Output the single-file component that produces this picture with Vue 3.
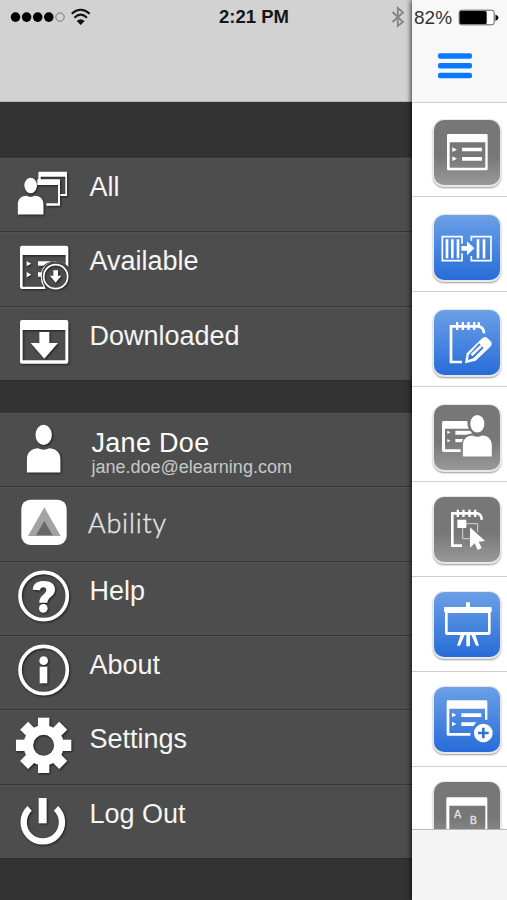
<script setup>
const person = (cx, headTop, k) =>
  `<g transform="translate(${cx} ${headTop}) scale(${k})"><ellipse cx="0" cy="30" rx="25" ry="31"/><path d="M-51 145V104C-51 82-34 71-17 71Q0 80 17 71C34 71 51 82 51 104V145Z"/></g>`

const groups = [
  [
    {
      label: 'All', size: 'short', box: '0 21 240 222',
      art: `<path d="M117 65H201V138H181V132H196V80H122V90H115V67Z"/><path d="M112 88H180V167H139V160H174V105H112Z"/>` + person(92, 84, 0.755),
    },
    {
      label: 'Available', size: 'tall', box: '0 243 240 225',
      art: `<path fill-rule="evenodd" d="M66 287H199Q205 287 205 293V350Q190 334 168 334Q140 336 128 360Q122 378 130 400L137 417H66Q60 417 60 411V293Q60 287 66 287ZM68 315V410H131Q122 396 122 378Q124 340 166 333Q185 333 197 342V315Z"/><path d="M80 334L94 341L80 348ZM80 366L94 374L80 382ZM114 334H155Q140 338 130 347H114ZM114 367H125L123 380H114Z"/><circle cx="167" cy="380" r="36" fill="none" stroke="#fff" stroke-width="5"/><path d="M160 361H174V377H184L167 398L150 377H160Z"/>`,
    },
    {
      label: 'Downloaded', size: 'short', box: '0 18 240 222',
      art: `<path fill-rule="evenodd" d="M66 60H199Q205 60 205 66V185Q205 191 199 191H66Q60 191 60 185V66Q60 60 66 60ZM68 90V181H196V90Z"/><path d="M118 96H148V129H174L133 176L92 129H118Z"/>`,
    },
  ],
  [
    { label: 'Jane Doe', email: 'jane.doe@elearning.com', size: 'short', box: '0 336 240 222', art: person(131, 375, 0.985) },
    {
      label: 'Ability', brand: true, size: 'tall', box: '0 3 240 225',
      art: `<rect x="64" y="44" width="136" height="136" rx="27"/><path fill="#a3a3a3" d="M133 67L182 153H84Z"/><path fill="#686868" d="M133 108L158 151H108Z"/>`,
    },
    {
      label: 'Help', size: 'short', box: '0 228 240 222',
      art: `<circle cx="131" cy="333" r="71" fill="none" stroke="#fff" stroke-width="11"/><path d="M98 314C100 294 114 288 131 288C153 288 165 298 165 313C165 335 143 336 142 353H118C117 331 139 328 139 315C139 304 121 303 120 316Z"/><circle cx="130" cy="370" r="13"/>`,
    },
    {
      label: 'About', size: 'short', box: '0 15 240 222',
      art: `<circle cx="131" cy="120" r="71" fill="none" stroke="#fff" stroke-width="11"/><circle cx="131" cy="92" r="13"/><path d="M119 110H142V160H119Z"/>`,
    },
    {
      label: 'Settings', size: 'tall', box: '0 237 240 225',
      art: `<circle cx="131" cy="346" r="46" fill="none" stroke="#fff" stroke-width="29"/>` +
        [0, 45, 90, 135, 180, 225, 270, 315].map(a => `<path transform="rotate(${a} 131 346)" d="M114 263H148V296H114Z"/>`).join(''),
    },
    {
      label: 'Log Out', size: 'short', box: '0 42 240 222',
      art: `<path d="M116 84H140V160H116Z"/><path fill="none" stroke="#fff" stroke-width="19" d="M89 115A57.500 57.500 0 1 0 168 115"/>`,
    },
  ],
]

const notepad = `<path d="M194 216H161V109H244Q260 113 260 130" fill="none" stroke="#fff" stroke-width="8"/><path d="M176 96h7v24h-7zM193 96h7v24h-7zM210 96h7v24h-7zM227 96h7v24h-7zM241 97h7v14h-7z"/>`

const tiles = [
  {
    tone: 'grey', pos: 'first', box: '110 60 198 198',
    art: `<path fill-rule="evenodd" d="M153 102H267Q271 102 271 106V207Q271 211 267 211H153Q149 211 149 207V106Q149 102 153 102ZM157 127V203H264V127Z"/><path d="M165 142L179 149L165 156ZM165 169L179 176L165 183ZM194 143H254V154H194ZM194 171H254V182H194Z"/>`,
  },
  {
    tone: 'blue', pos: 'upper', box: '110 345 198 198',
    art: `<g fill="none" stroke="#fff" stroke-width="5"><path d="M194 431V410H135V482H194V460"/><path d="M222 422V410H281V482H222V468"/></g><path d="M145 418h8v57h-8zM161 418h8v57h-8zM178 418h8v57h-8zM238 418h8v57h-8zM256 418h8v57h-8z"/><path d="M192 438H209V424L231 445L209 466V452H192Z"/>`,
  },
  {
    tone: 'blue', pos: 'upper', box: '110 60 198 198',
    art: notepad + `<path fill-rule="evenodd" d="M203 220L208 190L253 146Q262 137 270 144L280 154Q287 162 279 170L235 212ZM214 195L212 210L228 205L259 174L245 160Z"/><path d="M220 193L249 165L254 170L225 199Z" fill="#fff"/>`,
  },
  {
    tone: 'grey', pos: 'upper', box: '110 345 198 198',
    art: `<path d="M139 393H210Q209 405 214 416H143V478H190V486H139Q134 486 134 481V398Q134 393 139 393ZM150 422L160 427L150 432ZM150 447L160 452L150 457ZM174 422H218L225 430Q214 433 207 434H174ZM174 447H198L193 457H174Z"/>` + person(240, 376, 0.85),
  },
  {
    tone: 'grey', pos: 'lower', box: '110 52 198 198',
    art: `<path fill="none" stroke="#fff" stroke-width="8" d="M194 198H165V101H240Q253 105 253 120"/><path d="M178 90h7v22h-7zM195 90h7v22h-7zM213 90h7v22h-7zM230 90h7v22h-7z"/><path fill="none" stroke="#d5d5d5" stroke-width="3" d="M196 143V177H219M206 132H241V157"/><path d="M180 120H207V145H180ZM218 143L263 184L244 186L253 205L241 211L232 191L218 204Z"/>`,
  },
  {
    tone: 'blue', pos: 'lower', box: '110 335 198 198',
    art: `<path fill-rule="evenodd" d="M206 366H218V380H280Q283 380 283 383V395H280V457Q280 464 274 464H149Q143 464 143 457V395H140V383Q140 380 143 380H206ZM151 398V455H272V398Z"/><path d="M207 463H218V498H207ZM190 463H202L188 496H179ZM222 463H234L245 496H236Z"/>`,
  },
  {
    tone: 'blue', pos: 'lower', box: '110 52 198 198',
    art: `<path d="M152 92H266Q270 92 270 96V150H263V117H156V190H219V198H152Q148 198 148 194V96Q148 92 152 92ZM164 129L177 136L164 143ZM164 156L177 163L164 170ZM192 131H252V142H192ZM192 158H237L228 169H192Z"/><circle cx="258" cy="190" r="28"/><path fill="#3073d4" d="M254 174H262V186H274V194H262V206H254V194H242V186H254Z"/>`,
  },
  {
    tone: 'grey', pos: 'lower', box: '110 335 198 198', letters: true,
    art: `<path fill-rule="evenodd" d="M152 381H266Q270 381 270 385V500H147V385Q147 381 152 381ZM156 406V500H264V406Z"/>`,
  },
]
</script>

<template>
  <div class="screen">
    <nav class="drawer">
      <header class="status">
        <svg class="signal" viewBox="0 0 70 24" width="70" height="24">
          <circle v-for="n in 4" :key="n" :cx="4.4 + n * 11.1" cy="13.100" r="4.800" />
          <circle cx="60" cy="13.100" r="4.200" fill="none" stroke="#777" stroke-width="1" />
        </svg>
        <svg class="wifi" viewBox="210 21 66 60" width="22" height="20">
          <g fill="none" stroke="#111" stroke-width="6">
            <path d="M215 41Q242 18 269 41" />
            <path d="M223 53Q242 35 261 53" />
          </g>
          <path d="M230 63Q242 53 254 63L242 75Z" fill="#111" />
        </svg>
        <span class="time">2:21 PM</span>
        <svg class="bluetooth" viewBox="0 0 14 22" width="14" height="22">
          <path d="M1.500 6L12 16L6.800 20V2L12 6.500L1.500 16" fill="none" stroke="#858585" stroke-width="1.800" />
        </svg>
      </header>
      <ul v-for="(group, g) in groups" :key="g" class="group">
        <li v-for="item in group" :key="item.label" class="item" :class="item.size">
          <svg class="icon" :class="{ flat: item.brand }" :viewBox="item.box" v-html="item.art" />
          <div class="text" :class="{ brand: item.brand, account: item.email }">
            <span class="label">{{ item.label }}</span>
            <span v-if="item.email" class="email">{{ item.email }}</span>
          </div>
        </li>
      </ul>
    </nav>
    <main class="content">
      <header class="bar">
        <div class="power">
          <span>82%</span>
          <svg viewBox="0 0 41 17" width="41" height="17">
            <rect x="1.200" y="1.200" width="35" height="14.600" rx="2.500" fill="#fff" stroke="#555" stroke-width="1" />
            <rect x="1.700" y="1.900" width="27" height="13.200" rx="1.500" />
            <path d="M37.500 5.500Q40.500 7 40.500 8.700T37.500 12Z" />
          </svg>
        </div>
        <svg class="burger" viewBox="0 0 34 26" width="34" height="26">
          <rect v-for="n in 3" :key="n" x="0" :y="(n - 1) * 9.7 + 0.3" width="34" height="5.500" rx="2" />
        </svg>
      </header>
      <div class="list">
        <div v-for="(tile, i) in tiles" :key="i" class="cell" :class="tile.pos">
          <div class="tile" :class="tile.tone">
            <svg :viewBox="tile.box" width="66" height="66">
              <g v-html="tile.art"></g>
              <g v-if="tile.letters" class="letters">
                <text x="170" y="442">A</text>
                <text x="217" y="462">B</text>
              </g>
            </svg>
          </div>
        </div>
      </div>
      <footer class="toolbar"></footer>
    </main>
  </div>
</template>

<style>
body { margin: 0; overflow: hidden; }
</style>

<style scoped>
.screen { display: flex; width: 507px; height: 900px; overflow: hidden; font-family: "Liberation Sans", Arial, sans-serif; }
svg { display: block; flex: none; }
.drawer { width: 412px; flex: none; background: #333; }
.status { display: flex; align-items: flex-start; height: 102px; box-sizing: border-box; padding-top: 4px; background: #d2d2d2; border-bottom: 1px solid #b5b5b5; }
.wifi { margin-top: 3px; }
.time { margin-left: 127px; width: 100px; padding-top: 2px; font-size: 18.5px; line-height: 21px; font-weight: 700; color: #151515; white-space: nowrap; }
.bluetooth { margin-left: 72px; margin-top: 2px; }
.group { margin: 0; padding: 55px 0 0; list-style: none; }
.group + .group { padding-top: 32px; }
.item { display: flex; height: 74px; box-sizing: border-box; background: #4d4d4d; box-shadow: inset 0 1px #363636, inset 0 2px #535353; }
.item.tall { height: 75px; }
.group .item:last-child { box-shadow: inset 0 1px #363636, inset 0 2px #535353, 0 1px #2b2b2b; }
.icon { width: 80px; height: 100%; fill: #fff; filter: drop-shadow(1px 1.5px 0.8px rgba(0, 0, 0, 0.6)); }
.icon.flat { filter: none; }
.text { display: flex; flex-direction: column; padding: 15px 0 0 9.5px; color: #f5f5f5; }
.label { font-size: 27px; line-height: 31px; white-space: nowrap; }
.account { padding: 16px 0 0 11.5px; color: #fff; }
.account .label { letter-spacing: 0.3px; }
.email { margin-top: -2px; font-size: 18px; line-height: 20px; color: #c8c8c8; }
.brand { padding: 21px 0 0 8px; }
.brand .label { font-family: Lato, sans-serif; font-weight: 300; letter-spacing: 0.8px; color: #e6e6e6; -webkit-text-stroke: 0.4px #e6e6e6; }
.content { position: relative; display: flex; flex-direction: column; flex: 1; background: #fff; box-shadow: -1px 0 5px rgba(0, 0, 0, 0.75); }
.bar { height: 103px; box-sizing: border-box; background: #f8f8f8; border-bottom: 1px solid #cfcfcf; }
.power { display: flex; align-items: center; gap: 6px; height: 34px; padding-left: 2px; font-size: 19px; color: #333; }
.power span { padding-top: 1px; }
.burger { margin: 19px 0 0 26px; fill: #087aff; }
.list { height: 726px; overflow: hidden; }
.cell { height: 95px; box-sizing: border-box; padding: 18px 0 0 21.5px; border-bottom: 1px solid #cfcfcf; }
.cell.first { height: 94px; padding-top: 17px; }
.cell.lower { padding-top: 15px; }
.tile { width: 66px; height: 65px; border-radius: 10px; box-shadow: 0 0 0 1px #e8e8e8, 0 1px 0 1px #e8e8e8, 0 2px 2px 1px #999; }
.tile svg { fill: #fff; }
.grey { background: linear-gradient(#777, #777 55%, #999); }
.blue { background: linear-gradient(#6ca0e7, #276cd8); }
.letters { font: 32px "DejaVu Sans", sans-serif; fill: #e2e2e2; stroke: #e2e2e2; stroke-width: 1px; }
.toolbar { flex: 1; background: #f4f4f4; border-top: 1px solid #b9b9b9; }
</style>
